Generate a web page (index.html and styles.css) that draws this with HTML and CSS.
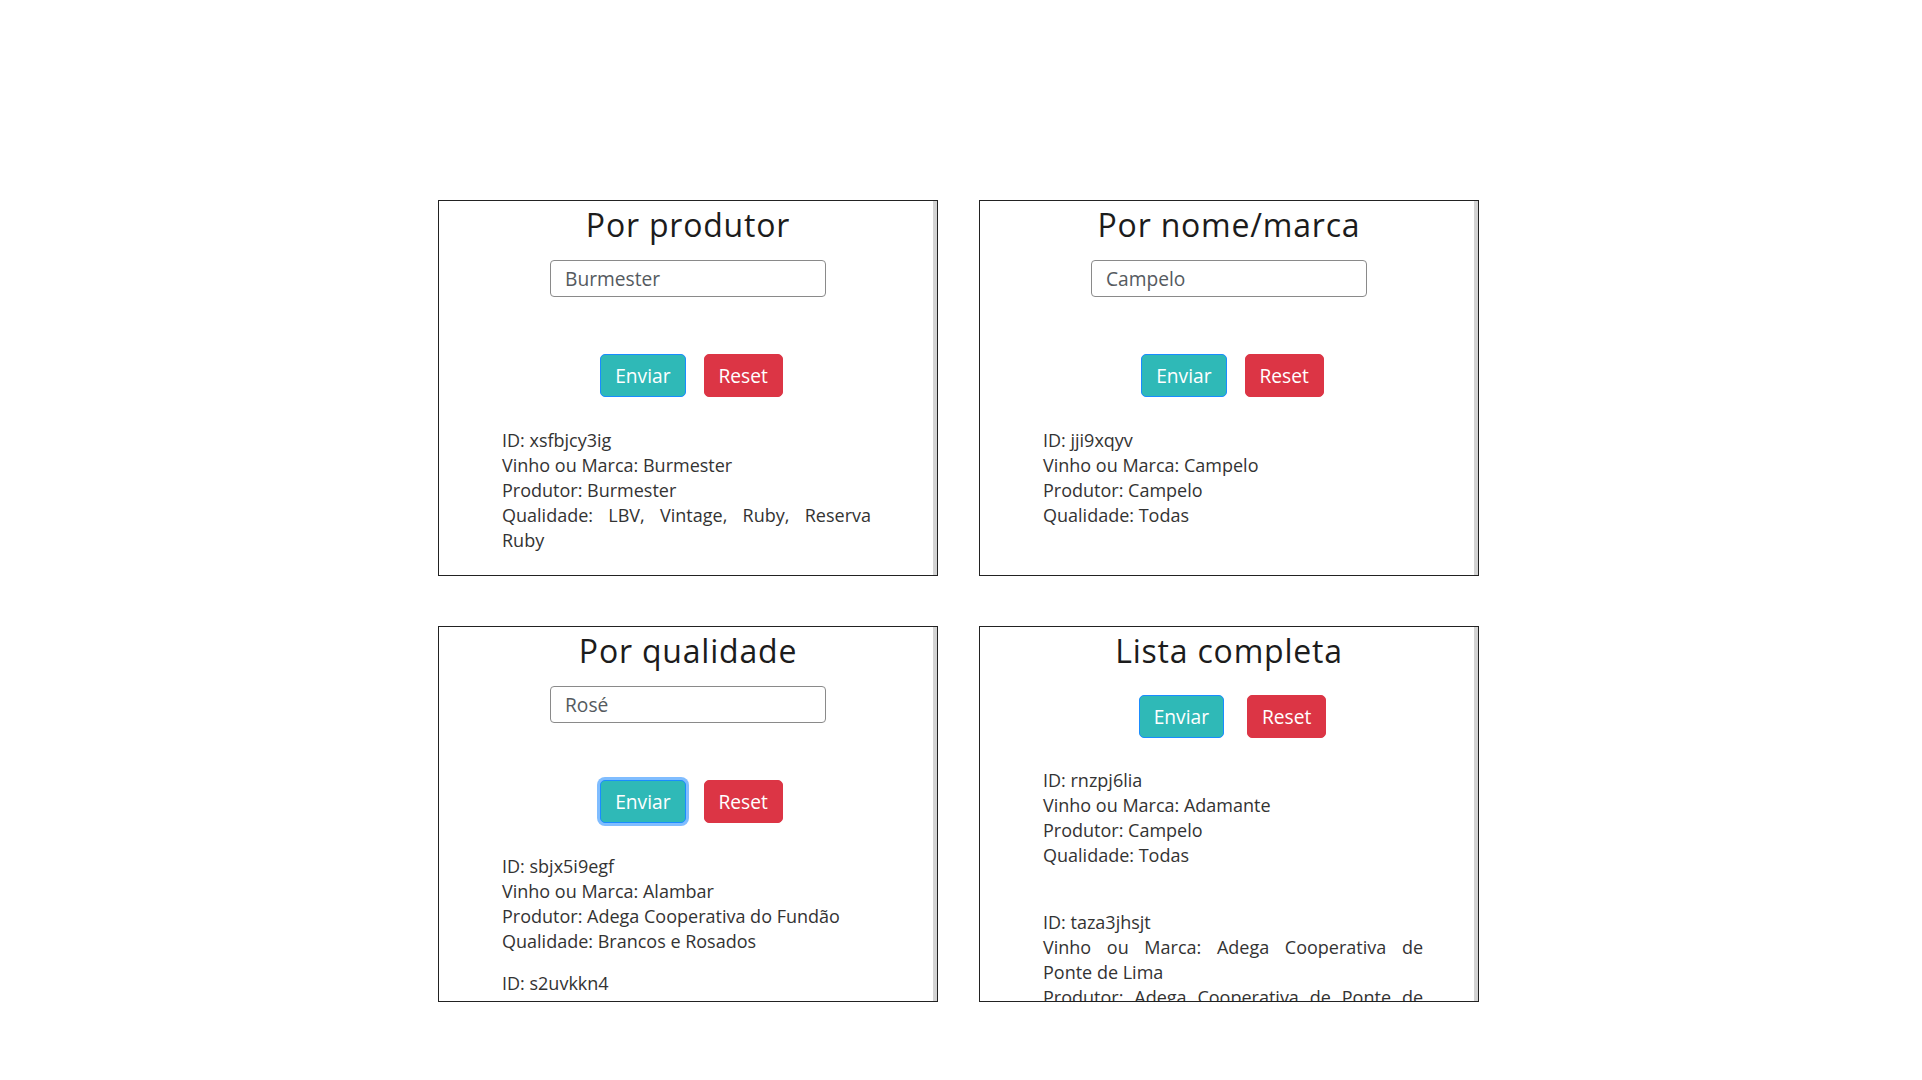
FILE: index.html
```html
<!DOCTYPE html>
<html lang="pt">
<head>
<meta charset="utf-8">
<title>Pesquisa de vinhos</title>
<link rel="stylesheet" href="styles.css">
</head>
<body>
<main class="grid">
  <section class="card">
    <h2 class="card-title">Por produtor</h2>
    <input class="field" type="text" value="Burmester">
    <div class="actions">
      <button class="btn btn-send" type="button">Enviar</button>
      <button class="btn btn-reset" type="button">Reset</button>
    </div>
    <div class="results">
      <div class="entry">
        <p>ID: xsfbjcy3ig</p>
        <p>Vinho ou Marca: Burmester</p>
        <p>Produtor: Burmester</p>
        <p>Qualidade: LBV, Vintage, Ruby, Reserva Ruby</p>
      </div>
    </div>
  </section>

  <section class="card">
    <h2 class="card-title">Por nome/marca</h2>
    <input class="field" type="text" value="Campelo">
    <div class="actions">
      <button class="btn btn-send" type="button">Enviar</button>
      <button class="btn btn-reset" type="button">Reset</button>
    </div>
    <div class="results">
      <div class="entry">
        <p>ID: jji9xqyv</p>
        <p>Vinho ou Marca: Campelo</p>
        <p>Produtor: Campelo</p>
        <p>Qualidade: Todas</p>
      </div>
    </div>
  </section>

  <section class="card">
    <h2 class="card-title">Por qualidade</h2>
    <input class="field" type="text" value="Rosé">
    <div class="actions">
      <button class="btn btn-send is-focused" type="button">Enviar</button>
      <button class="btn btn-reset" type="button">Reset</button>
    </div>
    <div class="results">
      <div class="entry">
        <p>ID: sbjx5i9egf</p>
        <p>Vinho ou Marca: Alambar</p>
        <p>Produtor: Adega Cooperativa do Fundão</p>
        <p>Qualidade: Brancos e Rosados</p>
      </div>
      <div class="entry">
        <p>ID: s2uvkkn4</p>
      </div>
    </div>
  </section>

  <section class="card card-full">
    <h2 class="card-title">Lista completa</h2>
    <div class="actions">
      <button class="btn btn-send" type="button">Enviar</button>
      <button class="btn btn-reset" type="button">Reset</button>
    </div>
    <div class="results">
      <div class="entry">
        <p>ID: rnzpj6lia</p>
        <p>Vinho ou Marca: Adamante</p>
        <p>Produtor: Campelo</p>
        <p>Qualidade: Todas</p>
      </div>
      <div class="entry">
        <p>ID: taza3jhsjt</p>
        <p>Vinho ou Marca: Adega Cooperativa de Ponte&nbsp;de&nbsp;Lima</p>
        <p>Produtor: Adega Cooperativa de Ponte de Lima</p>
      </div>
    </div>
  </section>
</main>
</body>
</html>
```

FILE: styles.css
```css
html, body {
  margin: 0;
  padding: 0;
  background: #ffffff;
}

body {
  font-family: "Open Sans", "Noto Sans", sans-serif;
  color: #333333;
}

.grid {
  display: grid;
  grid-template-columns: 500px 500px;
  grid-auto-rows: 376px;
  column-gap: 41px;
  row-gap: 50px;
  padding: 200px 0 0 438px;
}

.card {
  box-sizing: border-box;
  border: 1px solid #222222;
  box-shadow: inset -4px 0 0 #d3d3d3;
  overflow: hidden;
  padding-top: 5px;
}

.card-title {
  margin: 0;
  font-size: 32px;
  line-height: 38px;
  font-weight: 500;
  letter-spacing: 0.8px;
  text-align: center;
  color: #1c1c1c;
}

.field {
  box-sizing: border-box;
  display: block;
  width: 276px;
  height: 37px;
  margin: 16px auto 0;
  padding: 0 14px;
  border: 1px solid #8a8a8a;
  border-radius: 4px;
  font-family: inherit;
  font-size: 19.2px;
  color: #555a60;
  background: #fff;
  outline: none;
}

.actions {
  display: flex;
  justify-content: center;
  gap: 18px;
  margin-top: 57px;
  padding-left: 7px;
}

.card-full .actions {
  margin-top: 25px;
  gap: 23px;
}

.btn {
  box-sizing: border-box;
  height: 43px;
  padding: 0 14px;
  border-radius: 5px;
  font-family: inherit;
  font-size: 19.2px;
  line-height: 41px;
  color: #ffffff;
  cursor: pointer;
}

.btn-send {
  background: #2fb9b7;
  border: 1px solid #1a8cff;
}

.btn-reset {
  background: #dc3545;
  border: 1px solid #dc3545;
}

.is-focused {
  box-shadow: 0 0 0 3px #80bdff;
}

.results {
  box-sizing: border-box;
  width: 369px;
  margin: 31px 0 0 63px;
  font-size: 18px;
  line-height: 25px;
  text-align: justify;
}

.card-full .results {
  width: 380px;
  margin-top: 30px;
}

.entry p {
  margin: 0;
}

.entry + .entry {
  margin-top: 17px;
}

.card-full .entry + .entry {
  margin-top: 42px;
}
```
